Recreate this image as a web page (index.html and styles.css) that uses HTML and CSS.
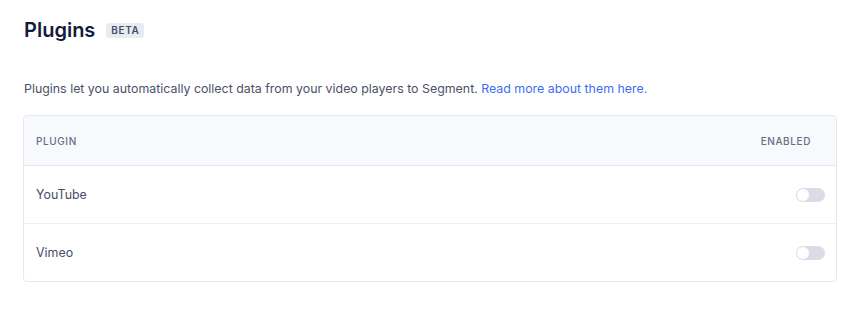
FILE: index.html
```html
<!DOCTYPE html>
<html lang="en">

<head>
	<meta charset="UTF-8">
	<meta name="viewport" content="width=device-width, initial-scale=1.0">
	<title>Plugins</title>
	<link rel="stylesheet" href="styles.css">
</head>

<body>

	<div class="page-header">
		<h1>Plugins</h1>
		<span class="badge">BETA</span>
	</div>

	<p class="intro">Plugins let you automatically collect data from your video players to Segment. <a href="#">Read more about them here.</a></p>

	<div class="plugins-table">
		<div class="table-head">
			<span>Plugin</span>
			<span>Enabled</span>
		</div>
		<div class="table-row">
			<span class="plugin-name">YouTube</span>
			<button class="toggle" aria-label="Enable YouTube"><span class="knob"></span></button>
		</div>
		<div class="table-row">
			<span class="plugin-name">Vimeo</span>
			<button class="toggle" aria-label="Enable Vimeo"><span class="knob"></span></button>
		</div>
	</div>

</body>

</html>
```
FILE: styles.css
```css
body {
	font-family: Inter, "Noto Sans", sans-serif;
	margin: 0;
	padding: 16px 32px 0 23px;
	color: #4b5164;
	background: #fff;
}

.page-header {
	display: flex;
	align-items: center;
	gap: 11px;
	margin-left: 1px;
}

h1 {
	margin: 0;
	font-size: 20px;
	font-weight: 600;
	line-height: 28px;
	color: #131b3d;
}

.badge {
	background-color: #e9ebf2;
	color: #474d66;
	font-size: 10px;
	font-weight: 600;
	letter-spacing: 0.6px;
	padding: 2px 5px;
	border-radius: 3px;
	line-height: 11px;
}

.intro {
	margin: 36px 0 17px 1px;
	font-size: 12.38px;
	line-height: 18px;
}

.intro a {
	color: #3e6df0;
	text-decoration: none;
}

.plugins-table {
	border: 1px solid #e7e8ee;
	border-radius: 4px;
	width: 812px;
}

.table-head {
	display: flex;
	justify-content: space-between;
	align-items: center;
	height: 49px;
	padding: 0 25px 0 12px;
	background-color: #f8f9fd;
	border-bottom: 1px solid #e7e8ee;
	border-radius: 4px 4px 0 0;
	font-size: 10px;
	font-weight: 500;
	letter-spacing: 0.6px;
	text-transform: uppercase;
	color: #676d82;
}

.table-row {
	display: flex;
	justify-content: space-between;
	align-items: center;
	height: 57px;
	padding: 0 11px 0 12px;
	font-size: 12.4px;
	color: #474d66;
}

.table-row + .table-row {
	border-top: 1px solid #eeeff3;
}

.toggle {
	position: relative;
	width: 29px;
	height: 14px;
	padding: 0;
	border: none;
	border-radius: 7px;
	background-color: #dbdce5;
	cursor: pointer;
}

.knob {
	position: absolute;
	top: 1px;
	left: 1px;
	width: 12px;
	height: 12px;
	border-radius: 50%;
	background: #fff;
}
```
